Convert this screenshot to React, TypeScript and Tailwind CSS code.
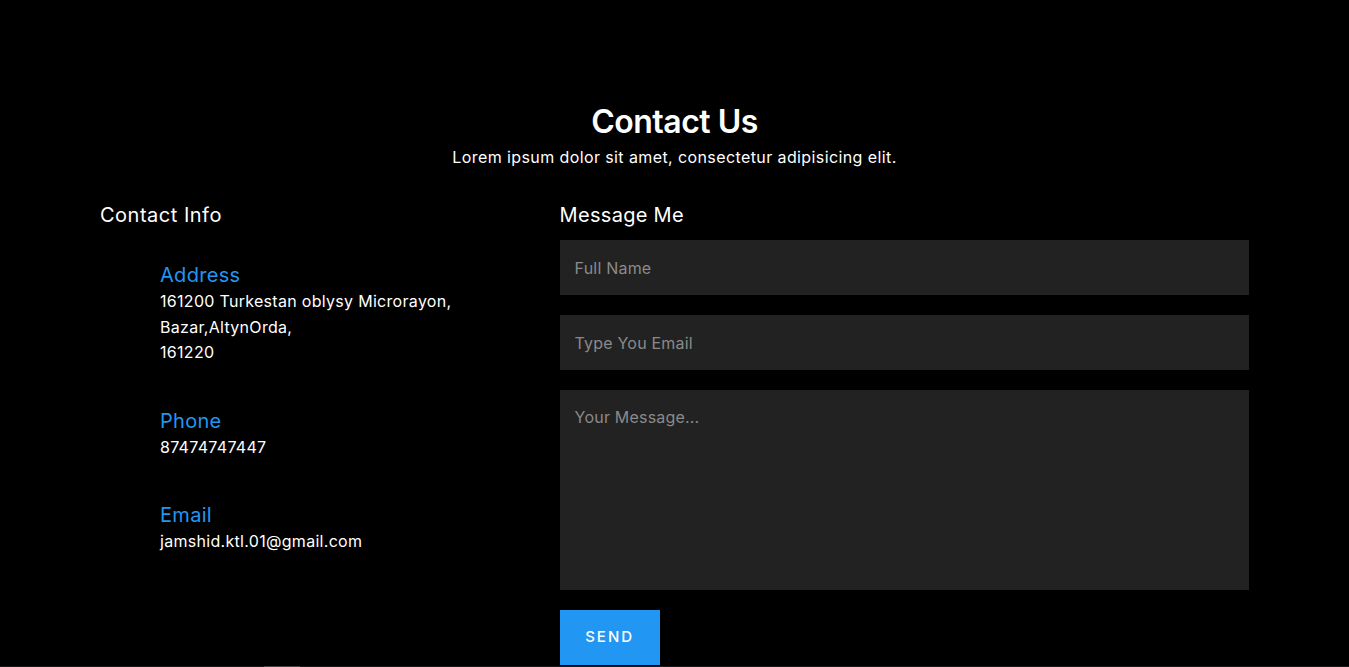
import React from "react";

const font = { fontFamily: "Inter, 'Noto Sans', 'Open Sans', sans-serif" };

function InfoItem({ title, lines }: { title: string; lines: string[] }) {
  return (
    <div className="pl-[60px]">
      <h3 className="text-[20px] leading-[28px] tracking-[0.3px] text-[#2196f3] font-normal">{title}</h3>
      <div className="text-[16px] leading-[25.5px] tracking-[0.3px] text-white">
        {lines.map((l, i) => (
          <div key={i}>{l}</div>
        ))}
      </div>
    </div>
  );
}

export default function App() {
  return (
    <div className="min-h-screen bg-black text-white" style={font}>
      <section className="px-[100px] pt-[103px]">
        <div className="text-center">
          <h1 className="text-[32px] leading-[38px] font-semibold tracking-[-0.5px]">Contact Us</h1>
          <p className="mt-[4px] text-[16px] leading-[24px] tracking-[0.4px]">
            Lorem ipsum dolor sit amet, consectetur adipisicing elit.
          </p>
        </div>
        <div className="mt-[31px] flex">
          <div className="w-[40%]">
            <h2 className="text-[20px] leading-[30px] tracking-[0.5px] font-normal">Contact Info</h2>
            <div className="mt-[31px] flex flex-col gap-[41px]">
              <InfoItem
                title="Address"
                lines={["161200 Turkestan oblysy Microrayon,", "Bazar,AltynOrda,", "161220"]}
              />
              <InfoItem title="Phone" lines={["87474747447"]} />
              <InfoItem title="Email" lines={["jamshid.ktl.01@gmail.com"]} />
            </div>
          </div>
          <div className="w-[60%]">
            <h2 className="text-[20px] leading-[30px] tracking-[0.3px] font-normal">Message Me</h2>
            <form className="mt-[10px] flex flex-col gap-[20px]" onSubmit={(e) => e.preventDefault()}>
              <input
                type="text"
                placeholder="Full Name"
                className="h-[55px] w-full bg-[#222222] px-[15px] text-[16px] tracking-[0.2px] text-white outline-none placeholder:text-[#8a8a8a]"
              />
              <input
                type="email"
                placeholder="Type You Email"
                className="h-[55px] w-full bg-[#222222] px-[15px] text-[16px] tracking-[0.2px] text-white outline-none placeholder:text-[#8a8a8a]"
              />
              <textarea
                placeholder="Your Message..."
                className="h-[200px] w-full resize-none bg-[#222222] px-[15px] pt-[15px] text-[16px] leading-[24px] tracking-[0.2px] text-white outline-none placeholder:text-[#8a8a8a]"
              />
              <button
                type="submit"
                className="h-[55px] w-[100px] bg-[#2196f3] text-[15px] font-medium tracking-[2px] text-white"
              >
                SEND
              </button>
            </form>
          </div>
        </div>
      </section>
      <div className="mt-px flex h-px bg-[#1a1a1a]">
        <div className="ml-[264px] w-[36px] bg-[#444444]" />
      </div>
      <div className="h-[40px]" />
    </div>
  );
}
